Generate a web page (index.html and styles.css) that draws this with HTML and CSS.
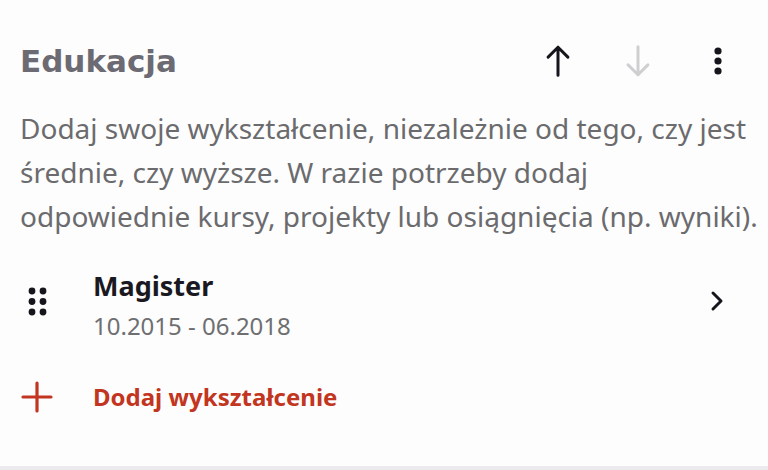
FILE: index.html
```html
<!DOCTYPE html>
<html>
<head>
    <title>Edukacja</title>
    <link rel="stylesheet" href="styles.css">
</head>
<body>
    <div class="section">
        <div class="header">
            <h2 class="title">Edukacja</h2>
            <div class="actions">
                <button class="icon-btn">
                    <svg width="36" height="36" viewBox="0 0 24 24" fill="none" stroke="#16151c" stroke-width="2" stroke-linecap="round" stroke-linejoin="round"><path d="M12 21.5V2.8M5.4 9.4L12 2.8l6.6 6.6"/></svg>
                </button>
                <button class="icon-btn">
                    <svg width="36" height="36" viewBox="0 0 24 24" fill="none" stroke="#cfcfd2" stroke-width="2" stroke-linecap="round" stroke-linejoin="round"><path d="M12 2.5v18.7M5.4 14.6l6.6 6.6 6.6-6.6"/></svg>
                </button>
                <button class="icon-btn">
                    <svg width="32" height="32" viewBox="0 0 32 32" fill="#16151c"><circle cx="16" cy="6" r="3.6"/><circle cx="16" cy="16" r="3.6"/><circle cx="16" cy="26" r="3.6"/></svg>
                </button>
            </div>
        </div>

        <p class="desc">Dodaj swoje wykształcenie, niezależnie od tego, czy jest średnie, czy wyższe. W razie potrzeby dodaj odpowiednie kursy, projekty lub osiągnięcia (np. wyniki).</p>

        <div class="item">
            <div class="handle">
                <svg width="22" height="30" viewBox="0 0 22 30" fill="#16151c"><circle cx="5" cy="5" r="3.4"/><circle cx="16" cy="5" r="3.4"/><circle cx="5" cy="15.5" r="3.4"/><circle cx="16" cy="15.5" r="3.4"/><circle cx="5" cy="26" r="3.4"/><circle cx="16" cy="26" r="3.4"/></svg>
            </div>
            <div class="item-text">
                <div class="item-title">Magister</div>
                <div class="item-date">10.2015 - 06.2018</div>
            </div>
            <div class="chevron">
                <svg width="14" height="22" viewBox="0 0 14 22" fill="none" stroke="#16151c" stroke-width="3" stroke-linecap="round" stroke-linejoin="round"><path d="M3 3l8 8-8 8"/></svg>
            </div>
        </div>

        <div class="add">
            <svg width="32" height="32" viewBox="0 0 32 32" fill="none" stroke="#c23520" stroke-width="3.2" stroke-linecap="round"><path d="M16 2v28M2 16h28"/></svg>
            <span class="add-label">Dodaj wykształcenie</span>
        </div>
    </div>
    <div class="footer-line"></div>
</body>
</html>
```

FILE: styles.css
```css
body {
    margin: 0;
    background-color: #fdfdfd;
    font-family: "Noto Sans", sans-serif;
    height: 470px;
    overflow: hidden;
    display: flex;
    flex-direction: column;
}
.section {
    flex: 1;
    padding: 38px 20px 0 20px;
}
.header {
    display: flex;
    align-items: center;
    justify-content: space-between;
    height: 46px;
}
.title {
    margin: 0;
    font-family: "DejaVu Sans", sans-serif;
    font-weight: 700;
    font-size: 31px;
    color: #6c6b73;
}
.actions {
    display: flex;
    gap: 44px;
    margin-right: 12px;
}
.icon-btn {
    border: none;
    background: none;
    padding: 0;
    width: 36px;
    height: 36px;
    display: flex;
    align-items: center;
    justify-content: center;
}
.desc {
    margin: 22px -14px 0 0;
    font-size: 28px;
    line-height: 44px;
    color: #6b6b6e;
}
.item {
    display: flex;
    align-items: center;
    margin-top: 30px;
}
.handle {
    width: 73px;
    padding-left: 7px;
    margin-bottom: 12px;
    box-sizing: border-box;
    display: flex;
}
.item-text {
    flex: 1;
}
.item-title {
    font-size: 27px;
    font-weight: 700;
    color: #1a1922;
    line-height: 36px;
}
.item-date {
    font-size: 24px;
    color: #6f6f72;
    line-height: 40px;
    margin-top: 2px;
}
.chevron {
    margin-right: 24px;
    margin-bottom: 12px;
    display: flex;
}
.add {
    display: flex;
    align-items: center;
    margin-top: 34px;
}
.add svg {
    width: 32px;
    height: 32px;
    margin-left: 1px;
    margin-right: 40px;
}
.add-label {
    font-size: 24px;
    font-weight: 700;
    color: #c23520;
}
.footer-line {
    height: 4px;
    background-color: #ebebef;
}
```
